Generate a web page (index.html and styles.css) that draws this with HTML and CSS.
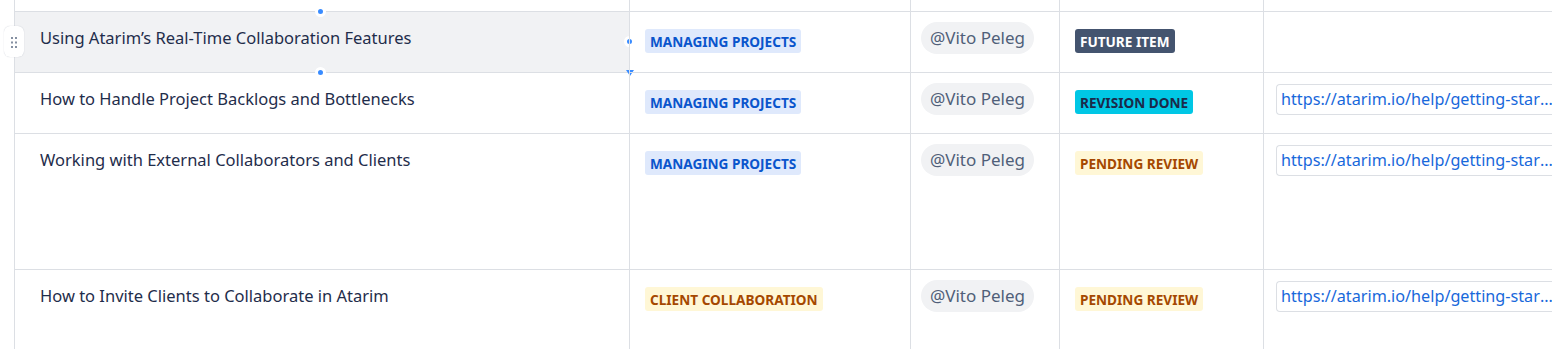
FILE: index.html
```html
<!DOCTYPE html>
<html lang="en">
<head>
<meta charset="utf-8">
<title>Help articles table</title>
<link rel="stylesheet" href="styles.css">
</head>
<body>
<div class="sheet">
  <div class="row row-top">
    <div class="cell"></div><div class="cell"></div><div class="cell"></div><div class="cell"></div><div class="cell"></div>
  </div>

  <div class="row row-std">
    <div class="cell title selected">
      <span class="grip">
        <svg width="8" height="12" viewBox="0 0 8 12"><g fill="#8590a2"><rect x="1" y="1" width="2" height="2"/><rect x="5" y="1" width="2" height="2"/><rect x="1" y="5.5" width="2" height="2"/><rect x="5" y="5.5" width="2" height="2"/><rect x="1" y="10" width="2" height="2"/><rect x="5" y="10" width="2" height="2"/></g></svg>
      </span>
      Using Atarim’s Real-Time Collaboration Features
      <span class="knob knob-top"></span>
      <span class="knob knob-bottom"></span>
      <span class="knob knob-right"></span>
      <span class="caret"></span>
    </div>
    <div class="cell tagcell"><span class="lozenge blue">Managing Projects</span></div>
    <div class="cell mentioncell"><span class="mention">@Vito Peleg</span></div>
    <div class="cell tagcell"><span class="lozenge dark">Future Item</span></div>
    <div class="cell linkcell"></div>
  </div>

  <div class="row row-std">
    <div class="cell title">How to Handle Project Backlogs and Bottlenecks</div>
    <div class="cell tagcell"><span class="lozenge blue">Managing Projects</span></div>
    <div class="cell mentioncell"><span class="mention">@Vito Peleg</span></div>
    <div class="cell tagcell"><span class="lozenge teal">Revision Done</span></div>
    <div class="cell linkcell"><span class="url">https://atarim.io/help/getting-started/</span></div>
  </div>

  <div class="row row-tall">
    <div class="cell title">Working with External Collaborators and Clients</div>
    <div class="cell tagcell"><span class="lozenge blue">Managing Projects</span></div>
    <div class="cell mentioncell"><span class="mention">@Vito Peleg</span></div>
    <div class="cell tagcell"><span class="lozenge yellow">Pending Review</span></div>
    <div class="cell linkcell"><span class="url">https://atarim.io/help/getting-started/</span></div>
  </div>

  <div class="row row-last">
    <div class="cell title">How to Invite Clients to Collaborate in Atarim</div>
    <div class="cell tagcell"><span class="lozenge yellow">Client Collaboration</span></div>
    <div class="cell mentioncell"><span class="mention">@Vito Peleg</span></div>
    <div class="cell tagcell"><span class="lozenge yellow">Pending Review</span></div>
    <div class="cell linkcell"><span class="url">https://atarim.io/help/getting-started/</span></div>
  </div>
</div>
</body>
</html>
```

FILE: styles.css
```css
* { box-sizing: border-box; }
html, body {
  margin: 0;
  padding: 0;
  background: #ffffff;
  overflow: hidden;
  height: 349px;
}
body {
  font-family: "Noto Sans", "Open Sans", sans-serif;
  color: #172b4d;
}
.sheet {
  padding-left: 14px;
  width: 1552px;
  overflow: hidden;
}
.row {
  display: grid;
  grid-template-columns: 615px 281px 149px 204px 289px;
}
.row-top { height: 12px; }
.row-std { height: 61px; }
.row-tall { height: 136px; }
.row-last { height: 79px; }

.cell {
  position: relative;
  border-left: 1px solid #dcdfe4;
  border-bottom: 1px solid #dcdfe4;
}
.row-last .cell { border-bottom: none; }

.title {
  padding: 14px 0 0 25px;
  font-size: 16.5px;
  line-height: 24px;
  color: #1f2d4b;
}
.title.selected {
  background: #f1f2f4;
}

.grip {
  position: absolute;
  left: -11px;
  top: 14px;
  width: 20px;
  height: 31px;
  background: #ffffff;
  border-radius: 6px;
  box-shadow: 0 0 1px rgba(9,30,66,0.25);
  display: flex;
  align-items: center;
  justify-content: center;
}
.grip svg { display: block; }

.knob {
  position: absolute;
  width: 11px;
  height: 11px;
  border-radius: 50%;
  background: #388bff;
  border: 3px solid #ffffff;
}
.knob-top { left: 300px; top: -6px; }
.knob-bottom { left: 300px; bottom: -6px; }
.knob-right { right: -6px; top: 24px; }
.caret {
  position: absolute;
  right: -5px;
  bottom: -4px;
  width: 0;
  height: 0;
  border-left: 4px solid transparent;
  border-right: 4px solid transparent;
  border-top: 6px solid #388bff;
}

.tagcell {
  padding: 17px 0 0 15px;
}
.lozenge {
  display: inline-block;
  height: 24px;
  line-height: 25px;
  padding: 0 5px;
  border-radius: 3px;
  font-size: 13.6px;
  font-weight: 700;
  text-transform: uppercase;
}
.blue { background: #dfe9fc; color: #0a55cc; }
.dark { background: #44546f; color: #ffffff; }
.teal { background: #00c7e5; color: #1b2a4a; }
.yellow { background: #fff7d6; color: #a54800; }

.mentioncell {
  padding: 10px 0 0 10px;
}
.mention {
  display: inline-block;
  height: 32px;
  line-height: 32px;
  padding: 0 9px;
  border-radius: 16px;
  background: #f1f2f4;
  color: #505f79;
  font-size: 17px;
}

.linkcell {
  padding: 11px 0 0 12px;
}
.url {
  display: block;
  width: 280px;
  height: 31px;
  line-height: 29px;
  padding: 0 0 0 4px;
  border: 1px solid #dcdfe4;
  border-right: none;
  border-radius: 4px 0 0 4px;
  color: #1868db;
  font-size: 16.2px;
  white-space: nowrap;
  overflow: hidden;
  text-overflow: ellipsis;
}
```
